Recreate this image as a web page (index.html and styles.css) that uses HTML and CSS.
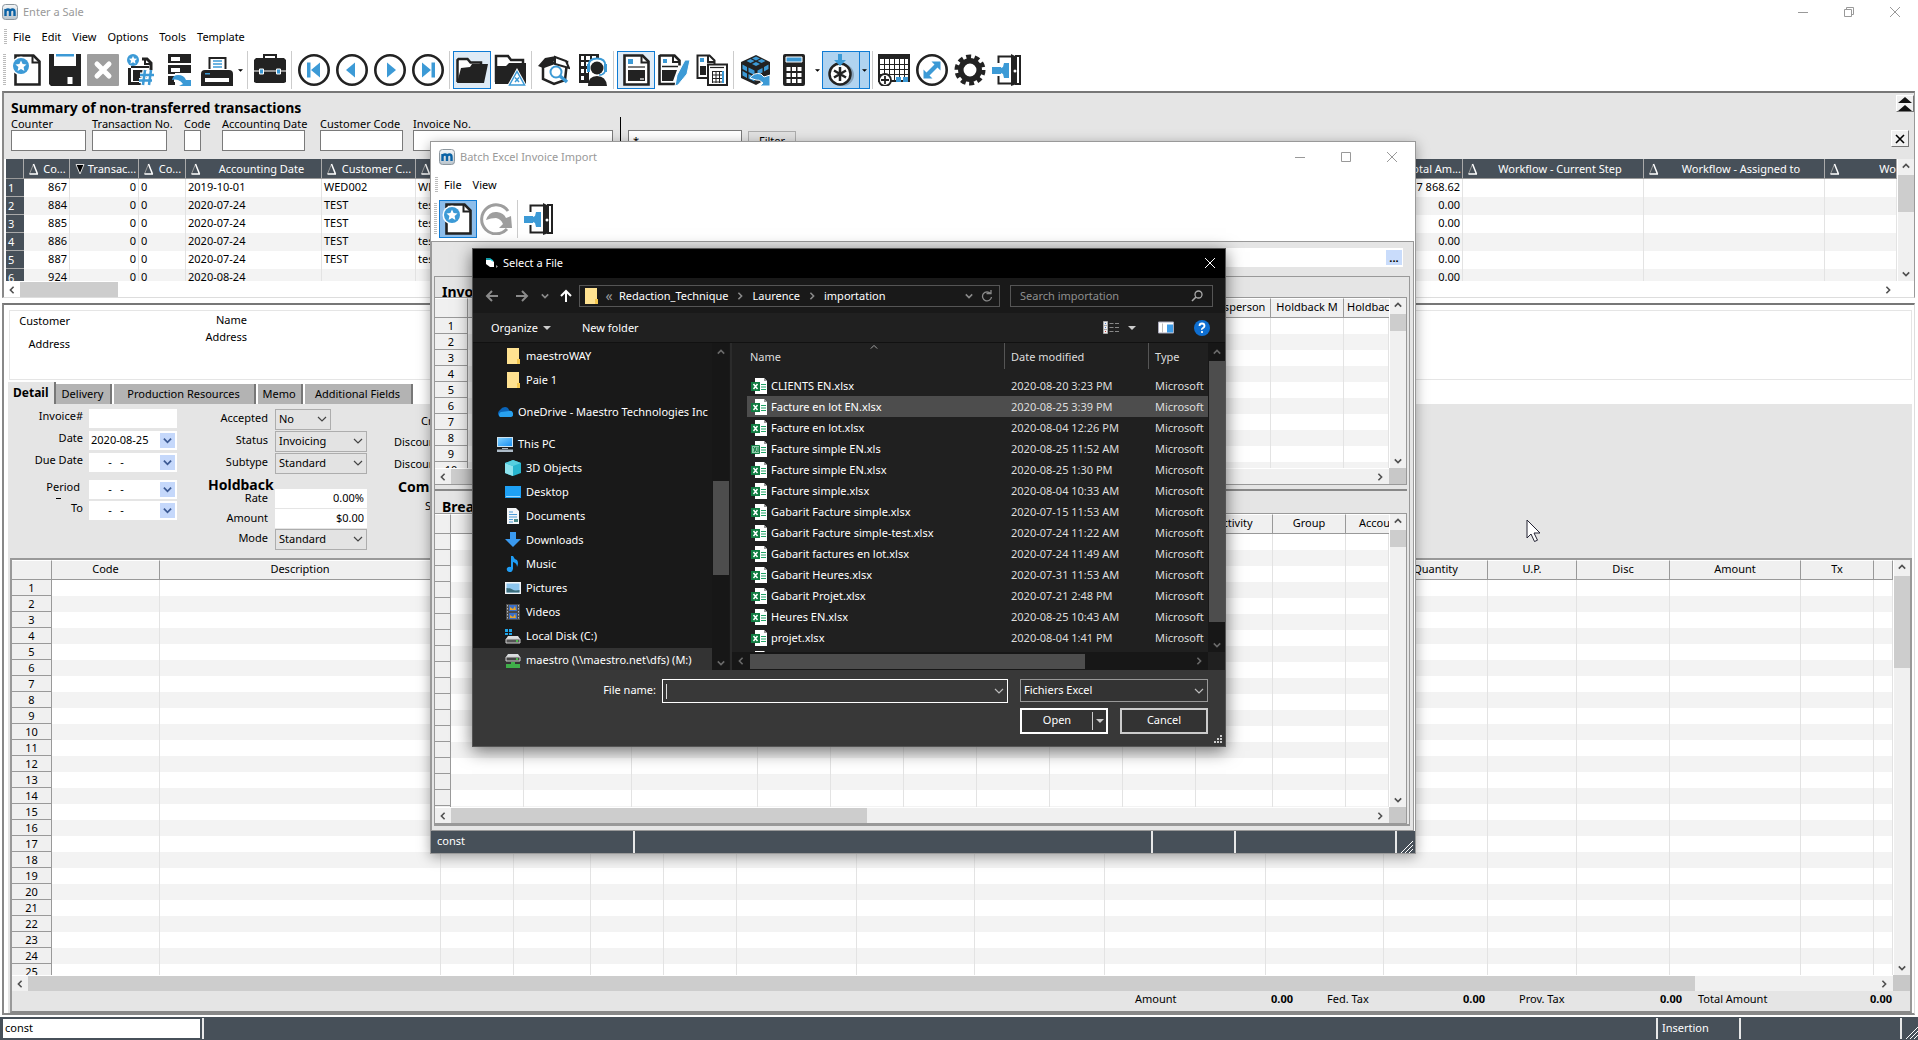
FILE: index.html
```html
<!DOCTYPE html>
<html lang="en">
<head>
<meta charset="utf-8">
<title>Enter a Sale</title>
<link rel="stylesheet" href="styles.css">
<script src="grid.js" defer></script>
</head>
<body>
<svg class="sprite" aria-hidden="true">
  <defs>
    <linearGradient id="logoBg" x1="0" y1="0" x2="0" y2="1"><stop offset="0" stop-color="#f4f6f8"/><stop offset="1" stop-color="#b9c4cc"/></linearGradient>
    <linearGradient id="screen" x1="0" y1="0" x2="1" y2="1"><stop offset="0" stop-color="#7fd0ff"/><stop offset="1" stop-color="#1a8ff0"/></linearGradient>
  </defs>
  <symbol id="logo" viewBox="0 0 16 16"><rect x=".5" y=".5" width="15" height="15" rx="3" fill="url(#logoBg)" stroke="#8d979e"/><path d="M3.500 12V5M3.500 7.500Q4 5.500 6 5.500t2 2.500V12M8 7.500Q8.500 5.500 10.500 5.500t2 2.500V12" fill="none" stroke="#0a62a5" stroke-width="2.400"/></symbol>
  <symbol id="star-badge" viewBox="0 0 16 16"><circle cx="8" cy="8" r="8" fill="#3c9ad6"/><path d="M8 2.500l1.600 3.500 3.900.4-2.900 2.600.8 3.900L8 11l-3.400 1.900.8-3.900L2.500 6.400 6.400 6z" fill="#fff"/></symbol>
  <symbol id="new" viewBox="0 0 32 32"><path d="M4.500 1.500h18l6 6v23h-24z" fill="#fff" stroke="#222" stroke-width="2.600"/><path d="M21.500 1v7.500H29" fill="none" stroke="#222" stroke-width="2"/><circle cx="10" cy="12" r="9.500" fill="#fff"/><use href="#star-badge" x="2" y="4" width="16" height="16"/></symbol>
  <symbol id="save" viewBox="0 0 32 32"><path d="M0 0h5v12h22V0h5v32H2l-2-2z" fill="#222"/><path d="M7 0h18v2.500H7z" fill="#3c9ad6"/><path d="M5 21h22v11H5z" fill="#222"/><path d="M18.500 23h5v7h-5z" fill="#fff"/></symbol>
  <symbol id="delete" viewBox="0 0 32 32"><rect width="32" height="32" rx="1" fill="#9e9e9e"/><path d="M10 10l12 12M22 10L10 22" stroke="#fff" stroke-width="5" stroke-linecap="round"/></symbol>
  <symbol id="number" viewBox="0 0 32 32"><path d="M17 5h5l4 4v8M4.500 14v15.500H18" fill="none" stroke="#222" stroke-width="3"/><path d="M20 4v6h6" fill="none" stroke="#222" stroke-width="2"/><path d="M8 16h14v11H8z" fill="#222"/><path d="M6 13h18" stroke="#222" stroke-width="2"/><use href="#star-badge" x="2" y="0" width="12" height="12"/><path d="M20 16l-2 15M26 16l-2 15M15 21h14M14 26.500h13" stroke="#fff" stroke-width="5"/><path d="M20 16l-2 15M26 16l-2 15M15 21h14M14 26.500h13" stroke="#3c9ad6" stroke-width="2.500"/></symbol>
  <symbol id="server" viewBox="0 0 32 32"><path d="M5 0h23v9H5zM5 11h23v9H5zM5 22h12v9H5z" fill="#222"/><path d="M8 3h9v4H8zM8 14h9v4H8zM8 25h6v3H8z" fill="#fff"/><path d="M12 19h17v13H12z" fill="#fff"/><path d="M5 22h6v9H5z" fill="#222"/><path d="M9 26q1-5 6-5 6 0 8 5h5v6H16l4-2q-2-3-5-4-3-1-6 0z" fill="#3c9ad6"/></symbol>
  <symbol id="print" viewBox="0 0 32 32"><path d="M8.500 15V4h16v11" fill="#fff" stroke="#222" stroke-width="2"/><path d="M12 7h9M12 10h9M12 13h9" stroke="#3c9ad6" stroke-width="1.500"/><path d="M4 16h24q4 0 4 4v12H0V20q0-4 4-4z" fill="#222"/><path d="M4 24h24v4H4z" fill="#fff"/><path d="M4 19h5v1.500H4z" fill="#3c9ad6"/></symbol>
  <symbol id="briefcase" viewBox="0 0 32 32"><path d="M10 4V1h12v3" fill="none" stroke="#222" stroke-width="2"/><path d="M2 4h28l2 2v22l-2 1H2l-2-1V6z" fill="#222"/><path d="M0 17h32" stroke="#fff" stroke-width="1"/><path d="M5.500 15h4v5h-4zM22.500 15h4v5h-4z" fill="#3c9ad6" stroke="#fff"/></symbol>
  <symbol id="ring" viewBox="0 0 32 32"><circle cx="16" cy="16" r="14.700" fill="#fff" stroke="#222" stroke-width="2.600"/></symbol>
  <symbol id="first" viewBox="0 0 32 32"><use href="#ring" width="32" height="32"/><path d="M9 8.500h3.500v15H9zM22 8.500v15L13 16z" fill="#3c9ad6"/></symbol>
  <symbol id="prev" viewBox="0 0 32 32"><use href="#ring" width="32" height="32"/><path d="M19 8.500v15L10 16z" fill="#3c9ad6"/></symbol>
  <symbol id="next" viewBox="0 0 32 32"><use href="#ring" width="32" height="32"/><path d="M13 8.500v15L22 16z" fill="#3c9ad6"/></symbol>
  <symbol id="last" viewBox="0 0 32 32"><use href="#ring" width="32" height="32"/><path d="M19.500 8.500H23v15h-3.500zM10 8.500v15L19 16z" fill="#3c9ad6"/></symbol>
  <symbol id="folder" viewBox="0 0 32 32"><path d="M1.500 28V6l1-1h9l3 3.500h10.500V12" fill="#fff" stroke="#222" stroke-width="2.500"/><path d="M1 29l4-15 9-1 2-3h16l-4 19z" fill="#222"/></symbol>
  <symbol id="folder-alert" viewBox="0 0 32 32"><path d="M2 28V2h12l3 4h12v6" fill="none" stroke="#222" stroke-width="2.500"/><path d="M1 30V12h11l3-3h17v21z" fill="#222"/><path d="M13 32L23 14l10 18z" fill="#fff"/><path d="M15.500 31l7.500-13.500L30.500 31z" fill="#fff" stroke="#3c9ad6" stroke-width="1.500"/><path d="M21 23.500l4 4.500M25 23.500L21 28" stroke="#3c9ad6" stroke-width="1.500"/></symbol>
  <symbol id="house" viewBox="0 0 32 32"><path d="M5 13l11-4 13-1-2 18-11 4-11-5z" fill="#fff" stroke="#222" stroke-width="2.500"/><path d="M0 12l7-8 11-2-3 7-10 5z" fill="#222"/><path d="M17 3l11 4 3 7-14-4z" fill="#fff" stroke="#222" stroke-width="2"/><circle cx="18" cy="18" r="5.500" fill="#fff" stroke="#3c9ad6" stroke-width="2"/><path d="M22 22l7 6" stroke="#3c9ad6" stroke-width="3.500"/></symbol>
  <symbol id="agent" viewBox="0 0 32 32"><path d="M3 0h20v10H13v19H3z" fill="#222"/><path d="M5 2h3v4H5zM10 2h4v4h-4zM16 2h4v4h-4zM5 8h3v4H5zM10 8h3v4h-3zM5 15h3v4H5zM10 15h2v4h-2zM5 22h3v4H5z" fill="#fff"/><circle cx="21" cy="13" r="9" fill="#fff"/><circle cx="21" cy="14" r="6.500" fill="#222"/><path d="M12 32q0-10 9-10t10 10z" fill="#222"/><path d="M12.500 12q0-7.500 8.500-7.500t8.500 7.500" fill="none" stroke="#3c9ad6" stroke-width="1.800"/><path d="M11 10h3v8h-3zM28 10h3v8h-3z" fill="#3c9ad6"/><path d="M29 18q-2 3-6 3" fill="none" stroke="#3c9ad6" stroke-width="1.500"/></symbol>
  <symbol id="page" viewBox="0 0 32 32"><path d="M4.500 1.500h18l6 6v23h-24z" fill="#fff" stroke="#222" stroke-width="2.600"/><path d="M21.500 1v7.500H29" fill="none" stroke="#222" stroke-width="2"/><path d="M8 5h5v5H8z" fill="#3c9ad6"/><path d="M8 13h17" stroke="#222" stroke-width="1.200"/><path d="M8 16h17v11H8z" fill="#222"/><path d="M20 25h4" stroke="#fff" stroke-width="1.200"/></symbol>
  <symbol id="page-pen" viewBox="0 0 32 32"><path d="M1.500 1.500h15l5 5v5M1.500 1v29H18" fill="none" stroke="#222" stroke-width="2.600"/><path d="M15 1v7h7" fill="none" stroke="#222" stroke-width="2"/><path d="M5 5h4v4H5z" fill="#3c9ad6"/><path d="M4 12.500h16" stroke="#222" stroke-width="1.500"/><path d="M4 16h15l-4 11H4z" fill="#222"/><path d="M17 32l2-11 8-15h5l-3 14-9 11z" fill="#3c9ad6" stroke="#fff"/></symbol>
  <symbol id="page-calc" viewBox="0 0 32 32"><path d="M1.500 25V1.500h12l5 5v4M1 24h10" fill="none" stroke="#222" stroke-width="2"/><path d="M12 1v7h7" fill="none" stroke="#222" stroke-width="2"/><path d="M4 4h4v4H4z" fill="#3c9ad6"/><path d="M4 12h6v9H4z" fill="#222"/><path d="M12 10.500h19v20.500H12z" fill="#fff" stroke="#222" stroke-width="2"/><path d="M14 13.500h14" stroke="#222" stroke-width="1.200"/><path d="M16 17.500h12M16 21h12M16 24.500h12M16 28h12M16.500 17v12M20 17v12M23.500 17v12" stroke="#222"/><path d="M26 17h2v12h-2z" fill="#3c9ad6"/></symbol>
  <symbol id="cube" viewBox="0 0 32 32"><path d="M1 8l15-7 14 7v15l-14 8L1 24z" fill="#222"/><path d="M16 2.500l4 2-4 2-4-2zM10.500 5l4 2-4 2-4-2zM21.500 5l4 2-4 2-4-2zM16 8l4 2-4 2-4-2zM2.500 10.500L7 13v4.500l-4.500-2.500zM8.500 13.500l6 3v4.500l-6-3zM2.500 17L7 19.500V24l-4.500-2.500zM8.500 20l6 3v4.500l-6-3zM17.500 16.500l5-2.500v4.500l-5 2zM24 13l4.500-2.500V15L24 17.500z" fill="#3c9ad6"/><path d="M10 24q4-6 11-4l3 3 6-2v11H20l3-3q-4-4-7-3z" fill="#3c9ad6" stroke="#fff"/></symbol>
  <symbol id="calculator" viewBox="0 0 32 32"><rect x="5" width="22" height="32" rx="2" fill="#222"/><path d="M8 3h16v5H8z" fill="#3c9ad6" stroke="#fff"/><path d="M10.500 13v16M16 13v16M21.500 13v16" stroke="#fff" stroke-width="4" stroke-dasharray="4 2"/></symbol>
  <symbol id="asterisk" viewBox="0 0 32 32"><circle cx="18" cy="21" r="11" fill="#87a3bb"/><circle cx="15" cy="20" r="10.500" fill="#fff" stroke="#222" stroke-width="2.500"/><path d="M15 13v14M9 16.500l12 7M21 16.500l-12 7" stroke="#222" stroke-width="2.500"/><path d="M13 0h4v6h4l-6 6-6-6h4z" fill="#3c9ad6"/></symbol>
  <symbol id="grid-add" viewBox="0 0 32 32"><path d="M1 1h30v26H1z" fill="#fff" stroke="#222" stroke-width="2"/><path d="M1 1h30v4H1z" fill="#222"/><path d="M6.500 4v22M11.500 4v22M16.500 4v22M21.500 4v22M26.500 4v22M1 10.500h30M1 15.500h30M1 20.500h30" stroke="#222"/><path d="M18 23h5v5h-5zM25 23h5v5h-5z" fill="#3c9ad6"/><circle cx="7" cy="26" r="6" fill="#fff" stroke="#222" stroke-width="1.800"/><path d="M7 22v8M3 26h8" stroke="#222" stroke-width="1.800"/></symbol>
  <symbol id="expand" viewBox="0 0 32 32"><use href="#ring" width="32" height="32"/><path d="M24.500 7.500v9l-3-3-8 8 3 3h-9v-9l3 3 8-8-3-3z" fill="#3c9ad6"/></symbol>
  <symbol id="gear" viewBox="0 0 32 32"><circle cx="16" cy="16" r="13" fill="none" stroke="#222" stroke-width="5" stroke-dasharray="4.800 3.370"/><circle cx="16" cy="16" r="9.200" fill="none" stroke="#222" stroke-width="5.500"/></symbol>
  <symbol id="door" viewBox="0 0 32 32"><path d="M19 2.500H6.500V9M6.500 22v7.500H19M23 2h5v28h-5" fill="none" stroke="#222" stroke-width="2"/><path d="M19 0l6 3v27l-6 2z" fill="#222"/><circle cx="23" cy="17" r="1.500" fill="#fff"/><path d="M0 13h9V9h8v15H9v-4H0z" fill="#3c9ad6"/><path d="M9 8l3 1-1 4-2 1zM9 25l3-1-1-4-2-1z" fill="#fff"/></symbol>
  <symbol id="redo" viewBox="0 0 32 32"><path d="M28 8A14.500 14.500 0 1 0 27 26" fill="none" stroke="#9e9e9e" stroke-width="3"/><path d="M6 17q3-9 11-8 7 1 9 6l5-2 1 12H19l4-4q-2-5-7-6-5 0-10 2z" fill="#9e9e9e"/></symbol>
  <symbol id="chev-l" viewBox="0 0 10 10"><path d="M7 1L3 5l4 4" fill="none" stroke="currentColor" stroke-width="2"/></symbol>
  <symbol id="chev-r" viewBox="0 0 10 10"><path d="M3 1l4 4-4 4" fill="none" stroke="currentColor" stroke-width="2"/></symbol>
  <symbol id="chev-u" viewBox="0 0 10 10"><path d="M1 7l4-4 4 4" fill="none" stroke="currentColor" stroke-width="2"/></symbol>
  <symbol id="chev-d" viewBox="0 0 10 10"><path d="M1 3l4 4 4-4" fill="none" stroke="currentColor" stroke-width="2"/></symbol>
  <symbol id="thin-d" viewBox="0 0 10 10"><path d="M1 3l4 4 4-4" fill="none" stroke="currentColor" stroke-width="1.200"/></symbol>
  <symbol id="thin-u" viewBox="0 0 10 10"><path d="M1 7l4-4 4 4" fill="none" stroke="currentColor" stroke-width="1.200"/></symbol>
  <symbol id="caret" viewBox="0 0 8 4"><path d="M0 0h8L4 4z" fill="currentColor"/></symbol>
  <symbol id="sort" viewBox="0 0 10 12"><path d="M.5 11L4.500 1" stroke="#999"/><path d="M4.500 1L8.500 11M.5 11h8.500" fill="none" stroke="#fff" stroke-width="1.500"/></symbol>
  <symbol id="sorted" viewBox="0 0 10 12"><path d="M1 1.500h8L5 11z" fill="#000" stroke="#ddd"/></symbol>
  <symbol id="win-min" viewBox="0 0 12 12"><path d="M1 6.500h10" stroke="currentColor"/></symbol>
  <symbol id="win-max" viewBox="0 0 12 12"><path d="M1.500 1.500h9v9h-9z" fill="none" stroke="currentColor"/></symbol>
  <symbol id="win-restore" viewBox="0 0 12 12"><path d="M1.500 3.500h7v7h-7zM3.500 3.500v-2h7v7h-2" fill="none" stroke="currentColor"/></symbol>
  <symbol id="win-close" viewBox="0 0 12 12"><path d="M1 1l10 10M11 1L1 11" stroke="currentColor"/></symbol>
  <symbol id="clear-x" viewBox="0 0 12 12"><path d="M2 2l8 8M10 2L2 10" stroke="currentColor" stroke-width="1.600"/></symbol>
  <symbol id="collapse" viewBox="0 0 16 16"><path d="M1 7l7-6 7 6zM1 15l7-6 7 6z" fill="#111"/></symbol>
  <symbol id="grip" viewBox="0 0 12 12"><path d="M0 12L12 0M4 12l8-8M8 12l4-4" stroke="#fff"/></symbol>
  <symbol id="yfolder" viewBox="0 0 16 16"><path d="M2 0h12v11l1 1v4H2z" fill="#ffe291"/><path d="M12 11h3v5h-3z" fill="#f5c850"/></symbol>
  <symbol id="cloud" viewBox="0 0 16 16"><path d="M2 12a4 4 0 0 1 1-6q2-3 5-3 3 0 4 3l2 2-8 5z" fill="#0a64b8"/><path d="M3 13a3 3 0 0 1 1-5l8-1a3 3 0 0 1 2 6z" fill="#28a0ee"/></symbol>
  <symbol id="pc" viewBox="0 0 16 16"><path d="M0 1h16v10H0z" fill="#d0e4f0"/><path d="M1 2h14v8H1z" fill="url(#screen)"/><path d="M5 12h6v1H5zM0 13.500h16V16H0z" fill="#aebcc8"/></symbol>
  <symbol id="cube3d" viewBox="0 0 16 16"><path d="M0 3l8-3 8 3v10l-8 3-8-3z" fill="#27b5cf"/><path d="M0 3l8 3v10l-8-3z" fill="#8de3ee"/><path d="M0 3l8-3 8 3-8 3z" fill="#56cfe0"/></symbol>
  <symbol id="desktop" viewBox="0 0 16 16"><path d="M0 2h16v12H0z" fill="#1ea0f5"/><path d="M1 12h14v1H1z" fill="#9ad6ff"/></symbol>
  <symbol id="document" viewBox="0 0 16 16"><path d="M2 0h9l3 3v13H2z" fill="#f4f6f8"/><path d="M4 4h4M4 6.500h8M4 9h8M4 11.500h4M4 14h4" stroke="#4d9bd6"/><path d="M9 11h4v3H9z" fill="#4b8b8b"/></symbol>
  <symbol id="download" viewBox="0 0 16 16"><path d="M5 0h6v7h5l-8 8-8-8h5z" fill="#3a9af0"/></symbol>
  <symbol id="music" viewBox="0 0 16 16"><path d="M6 0h2q1 3 4 4 2 3 0 7 0-4-4-5v7q-1 4-4 3-3-1-2-4 2-2 4-1z" fill="#1f9df5"/></symbol>
  <symbol id="picture" viewBox="0 0 16 16"><path d="M0 2h16v12H0z" fill="#f3f6f8"/><path d="M1.500 3.500h13v9h-13z" fill="#8cc5ee"/><path d="M1.500 8q4 0 6 1.500t7 .5v2.500h-13z" fill="#3c6e7c"/></symbol>
  <symbol id="video" viewBox="0 0 16 16"><path d="M1 0h14v16H1z" fill="#4a4a4a"/><path d="M4 1h8v6H4z" fill="#3b6fc9"/><path d="M4 9h8v6H4z" fill="#3b6fc9"/><path d="M5 3l3 2 2-3 1 4H5zM5 11l3 2 2-3 1 4H5z" fill="#e8a52c"/><path d="M2.500 1v14M13.500 1v14" stroke="#bbb" stroke-dasharray="1.500 1.500"/></symbol>
  <symbol id="disk" viewBox="0 0 16 16"><path d="M0 1h3v3H0zM4 1h3v3H4zM0 5h3v2H0zM4 5h3v2H4z" fill="#1fa5e8"/><path d="M3 8h10l2 3H1z" fill="#d9dcde"/><path d="M1 11h14v4H1z" fill="#555" stroke="#ccc"/><path d="M11 13h2" stroke="#4be04b" stroke-width="1.500"/></symbol>
  <symbol id="netdisk" viewBox="0 0 16 16"><path d="M3 2h10l2 3H1z" fill="#d9dcde"/><path d="M1 5h14v4H1z" fill="#444" stroke="#ccc"/><path d="M11 7h2" stroke="#4be04b" stroke-width="1.500"/><path d="M6 10h4v2h5v4H1v-4h5z" fill="#3fae49"/></symbol>
  <symbol id="xlsx" viewBox="0 0 16 16"><path d="M4 0h9l3 3v13H4z" fill="#fff"/><path d="M13 0l3 3h-3z" fill="#999"/><path d="M10 6.500h5M10 9h5M10 11.500h5" stroke="#21a366"/><path d="M0 4h9v9H0z" fill="#107c41"/><path d="M2.500 6l4 5M6.500 6l-4 5" stroke="#fff" stroke-width="1.500"/></symbol>
  <symbol id="xls" viewBox="0 0 16 16"><path d="M4 0h9l3 3v13H4z" fill="#fff"/><path d="M13 0l3 3h-3z" fill="#999"/><path d="M10 6.500h5M10 9h5M10 11.500h5" stroke="#21a366"/><path d="M.5 4.500h8v8h-8z" fill="#8fc9aa" stroke="#107c41"/><path d="M2 6l4 5M5 6l-2 5M7 6v5" stroke="#107c41"/></symbol>
  <symbol id="appicon" viewBox="0 0 16 16"><path d="M3 5h6l2 2v5H7L3 9z" fill="#fff"/><path d="M3 4h4l3 2" fill="none" stroke="#1fd0e0" stroke-width="1.500"/><path d="M13 10l2 1.500-2 1.500z" fill="#999"/></symbol>
  <symbol id="arrow-l" viewBox="0 0 14 12"><path d="M13 6H2M7 1L2 6l5 5" fill="none" stroke="currentColor" stroke-width="2"/></symbol>
  <symbol id="arrow-r" viewBox="0 0 14 12"><path d="M1 6h11M7 1l5 5-5 5" fill="none" stroke="currentColor" stroke-width="2"/></symbol>
  <symbol id="arrow-u" viewBox="0 0 12 14"><path d="M6 13V2M1 7l5-5 5 5" fill="none" stroke="currentColor" stroke-width="2"/></symbol>
  <symbol id="refresh" viewBox="0 0 12 12"><path d="M9.500 3.500A4.500 4.500 0 1 0 10.500 7M5.500 3.500h4.500V0" fill="none" stroke="currentColor" stroke-width="1.300"/></symbol>
  <symbol id="search" viewBox="0 0 12 12"><circle cx="7.500" cy="4.500" r="3.500" fill="none" stroke="currentColor" stroke-width="1.300"/><path d="M5 7L1 11" stroke="currentColor" stroke-width="1.600"/></symbol>
  <symbol id="views" viewBox="0 0 16 13"><path d="M.5.500h4v12h-4zM0 4.500h5M0 8.500h5" fill="#eee" stroke="#aaa"/><path d="M2 2.500h1M2 6.500h1" stroke="#47c"/><path d="M2 10.500h1" stroke="#c33"/><path d="M6.500 2.500h4M12 2.500h4M6.500 6.500h4M12 6.500h4M6.500 10.500h4M12 10.500h4" stroke="#888"/></symbol>
  <symbol id="pane" viewBox="0 0 16 12"><path d="M.5.500h15v11H.5z" fill="#fff" stroke="#aab"/><path d="M4.500 2v9" stroke="#bbb"/><path d="M9 3h6v8H9z" fill="#3d9be6"/></symbol>
  <symbol id="help" viewBox="0 0 16 16"><circle cx="8" cy="8" r="8" fill="#0f6fd1"/><path d="M5.500 6q0-2.500 2.500-2.500T10.500 6Q10.500 7 9 8T8 9.800M8 11v2" fill="none" stroke="#fff" stroke-width="1.800"/></symbol>
  <symbol id="dots" viewBox="0 0 9 9"><path d="M1 8h2M4 8h2M7 8h2M4 5h2M7 5h2M7 2h2" stroke="#ccc" stroke-width="2"/></symbol>
</svg>

<div class="app">
  <header class="titlebar">
    <svg class="i16"><use href="#logo"/></svg><span>Enter a Sale</span>
    <div class="winbtns"><button aria-label="Minimize"><svg class="i12"><use href="#win-min"/></svg></button><button aria-label="Restore"><svg class="i12"><use href="#win-restore"/></svg></button><button aria-label="Close"><svg class="i12"><use href="#win-close"/></svg></button></div>
  </header>
  <nav class="menubar"><button>File</button><button>Edit</button><button>View</button><button>Options</button><button>Tools</button><button>Template</button></nav>
  <div class="toolbar">
    <button aria-label="New"><svg><use href="#new"/></svg></button><button aria-label="Save"><svg><use href="#save"/></svg></button><button aria-label="Delete"><svg><use href="#delete"/></svg></button><button aria-label="New number"><svg><use href="#number"/></svg></button><button aria-label="Transfer"><svg><use href="#server"/></svg></button><button aria-label="Print"><svg><use href="#print"/></svg></button><button class="drop" aria-label="Print options"><svg><use href="#caret"/></svg></button><i class="sep"></i>
    <button aria-label="Briefcase"><svg><use href="#briefcase"/></svg></button><i class="sep"></i>
    <button aria-label="First"><svg><use href="#first"/></svg></button><button aria-label="Previous"><svg><use href="#prev"/></svg></button><button aria-label="Next"><svg><use href="#next"/></svg></button><button aria-label="Last"><svg><use href="#last"/></svg></button><i class="sep"></i>
    <button class="on" aria-label="Open folder"><svg><use href="#folder"/></svg></button><button aria-label="Folder alerts"><svg><use href="#folder-alert"/></svg></button><i class="sep"></i>
    <button aria-label="Find product"><svg><use href="#house"/></svg></button><button aria-label="Support"><svg><use href="#agent"/></svg></button><i class="sep"></i>
    <button class="on" aria-label="Page"><svg><use href="#page"/></svg></button><button aria-label="Edit page"><svg><use href="#page-pen"/></svg></button><button aria-label="Page totals"><svg><use href="#page-calc"/></svg></button><i class="sep"></i>
    <button aria-label="Cube"><svg><use href="#cube"/></svg></button><button aria-label="Calculator"><svg><use href="#calculator"/></svg></button><button class="drop" aria-label="Calculator options"><svg><use href="#caret"/></svg></button><button class="hot" aria-label="Add"><svg><use href="#asterisk"/></svg></button><button class="hot drop" aria-label="Add options"><svg><use href="#caret"/></svg></button><i class="sep tight"></i>
    <button aria-label="Add grid"><svg><use href="#grid-add"/></svg></button><button aria-label="Expand"><svg><use href="#expand"/></svg></button><button aria-label="Settings"><svg><use href="#gear"/></svg></button><button aria-label="Exit"><svg><use href="#door"/></svg></button>
  </div>

  <section class="summary">
    <div class="summary-head">
      <div class="summary-left">
        <h2>Summary of non-transferred transactions</h2>
        <div class="filters">
          <label>Counter<input class="w75"></label><label>Transaction No.<input class="w75"></label><label>Code<input class="w17"></label><label>Accounting Date<input class="w83"></label><label>Customer Code<input class="w83"></label><label>Invoice No.<input class="w200"></label>
          <div class="any"><input aria-label="Value" value="*"><button>Filter</button></div>
        </div>
      </div>
      <div class="summary-btns"><button class="collapse" aria-label="Collapse"><svg class="i16"><use href="#collapse"/></svg></button><button class="clear" aria-label="Clear"><svg class="i12"><use href="#clear-x"/></svg></button></div>
    </div>
    <div class="gridbox">
      <div class="clip sumclip">
        <table class="sumgrid">
          <colgroup><col class="c18"><col class="c46"><col class="c69"><col class="c47"><col class="c136"><col class="c94"><col><col class="c100"><col class="c181"><col class="c181"><col class="c72"></colgroup>
          <thead><tr><th></th><th><span><svg><use href="#sort"/></svg><b>Co...</b></span></th><th><span><svg><use href="#sorted"/></svg><b>Transac...</b></span></th><th><span><svg><use href="#sort"/></svg><b>Co...</b></span></th><th><span><svg><use href="#sort"/></svg><b>Accounting Date</b></span></th><th><span><svg><use href="#sort"/></svg><b>Customer C...</b></span></th><th><span><svg><use href="#sort"/></svg><b>Customer Name</b></span></th><th><span><svg><use href="#sort"/></svg><b class="right">Total Am...</b></span></th><th><span><svg><use href="#sort"/></svg><b>Workflow - Current Step</b></span></th><th><span><svg><use href="#sort"/></svg><b>Workflow - Assigned to</b></span></th><th><span><svg><use href="#sort"/></svg><b class="cut">Workflow</b></span></th></tr></thead>
          <tbody>
            <tr><th>1</th><td>867</td><td>0</td><td>0</td><td>2019-10-01</td><td>WED002</td><td>WEDNESDAY</td><td>7 868.62</td><td></td><td></td><td></td></tr>
            <tr><th>2</th><td>884</td><td>0</td><td>0</td><td>2020-07-24</td><td>TEST</td><td>test</td><td>0.00</td><td></td><td></td><td></td></tr>
            <tr><th>3</th><td>885</td><td>0</td><td>0</td><td>2020-07-24</td><td>TEST</td><td>test</td><td>0.00</td><td></td><td></td><td></td></tr>
            <tr><th>4</th><td>886</td><td>0</td><td>0</td><td>2020-07-24</td><td>TEST</td><td>test</td><td>0.00</td><td></td><td></td><td></td></tr>
            <tr><th>5</th><td>887</td><td>0</td><td>0</td><td>2020-07-24</td><td>TEST</td><td>test</td><td>0.00</td><td></td><td></td><td></td></tr>
            <tr><th>6</th><td>924</td><td>0</td><td>0</td><td>2020-08-24</td><td></td><td></td><td>0.00</td><td></td><td></td><td></td></tr>
          </tbody>
        </table>
      </div>
      <div class="vscroll"><svg><use href="#chev-u"/></svg><i class="th37"></i><svg><use href="#chev-d"/></svg></div>
      <div class="hscroll plain"><svg><use href="#chev-l"/></svg><i class="tw98"></i><svg><use href="#chev-r"/></svg></div>
    </div>
  </section>

  <main class="sale">
    <div class="customer"><div class="cust-a"><p>Customer</p><p>Address</p></div><div class="cust-b"><p>Name</p><p>Address</p></div></div>
    <div class="tabs" role="tablist"><button class="active" role="tab">Detail</button><button class="tab-s" role="tab">Delivery</button><button class="tab-l" role="tab">Production Resources</button><button class="tab-xs" role="tab">Memo</button><button class="tab-m" role="tab">Additional Fields</button></div>
    <div class="detail">
      <form class="form">
        <div class="col-a">
          <label for="inv">Invoice#</label><span class="field"><input id="inv"></span>
          <label for="dt">Date</label><span class="field"><input id="dt" value="2020-08-25"><button type="button" aria-label="Pick date"><svg><use href="#chev-d"/></svg></button></span>
          <label for="due">Due Date</label><span class="field"><input id="due" value="      -   -"><button type="button" aria-label="Pick due date"><svg><use href="#chev-d"/></svg></button></span>
          <label for="per" class="period">Period</label><span class="field gap"><input id="per" value="      -   -"><button type="button" aria-label="Pick start"><svg><use href="#chev-d"/></svg></button></span>
          <label for="to" class="to">To</label><span class="field last"><input id="to" value="      -   -"><button type="button" aria-label="Pick end"><svg><use href="#chev-d"/></svg></button></span>
        </div>
        <div class="col-b">
          <label for="acc">Accepted</label><span class="sel short"><select id="acc"><option>No</option></select><svg><use href="#thin-d"/></svg></span>
          <label for="st">Status</label><span class="sel"><select id="st"><option>Invoicing</option></select><svg><use href="#thin-d"/></svg></span>
          <label for="sub">Subtype</label><span class="sel"><select id="sub"><option>Standard</option></select><svg><use href="#thin-d"/></svg></span>
          <h3>Holdback</h3>
          <label for="rate">Rate</label><span class="num"><input id="rate" value="0.00%"></span>
          <label for="amt">Amount</label><span class="num"><input id="amt" value="$0.00"></span>
          <label for="mode">Mode</label><span class="sel"><select id="mode"><option>Standard</option></select><svg><use href="#thin-d"/></svg></span>
        </div>
        <div class="col-c"><p>Credit</p><p>Discount</p><p>Discount</p><h3>Commission</h3><p>Sales</p></div>
      </form>
      <div class="lines">
        <div class="gridbox grow">
          <div class="clip">
            <table class="datagrid" data-rows="25" data-numbered>
              <colgroup><col class="c40"><col class="c108"><col><col class="c73"><col class="c77"><col class="c73"><col class="c73"><col class="c120"><col class="c118"><col class="c130"><col class="c161"><col class="c118"><col class="c104"><col class="c89"><col class="c93"><col class="c131"><col class="c73"><col class="c19"></colgroup>
              <thead><tr><th></th><th>Code</th><th>Description</th><th></th><th></th><th></th><th></th><th></th><th></th><th></th><th></th><th></th><th>Quantity</th><th>U.P.</th><th>Disc</th><th>Amount</th><th>Tx</th><th></th></tr></thead>
              <tbody></tbody>
            </table>
          </div>
          <div class="vscroll"><svg><use href="#chev-u"/></svg><i class="th92"></i><svg><use href="#chev-d"/></svg></div>
          <div class="hscroll"><svg><use href="#chev-l"/></svg><i class="tgrow"></i><svg><use href="#chev-r"/></svg></div>
          <i class="corner"></i>
        </div>
        <dl class="totals"><div class="t158"><dt>Amount</dt><dd>0.00</dd></div><div class="t158"><dt>Fed. Tax</dt><dd>0.00</dd></div><div class="t163"><dt>Prov. Tax</dt><dd>0.00</dd></div><div class="t194"><dt>Total Amount</dt><dd>0.00</dd></div></dl>
      </div>
    </div>
  </main>
  <footer class="status main-status"><input aria-label="Status" value="const"><span class="st-grow"></span><span class="st82">Insertion</span><span class="st160"></span><span class="st18"><svg class="i12"><use href="#grip"/></svg></span></footer>
</div>

<section class="window" aria-label="Batch Excel Invoice Import">
  <header class="titlebar"><svg class="i16"><use href="#logo"/></svg><span>Batch Excel Invoice Import</span>
    <div class="winbtns"><button aria-label="Minimize"><svg class="i12"><use href="#win-min"/></svg></button><button aria-label="Maximize"><svg class="i12"><use href="#win-max"/></svg></button><button aria-label="Close"><svg class="i12"><use href="#win-close"/></svg></button></div></header>
  <nav class="menubar"><button>File</button><button>View</button></nav>
  <div class="toolbar"><button class="press" aria-label="New"><svg><use href="#new"/></svg></button><button aria-label="Redo"><svg><use href="#redo"/></svg></button><i class="sep"></i><button aria-label="Exit"><svg><use href="#door"/></svg></button></div>
  <div class="import">
    <div class="path"><input aria-label="File path"><button>...</button></div>
    <div class="panels">
      <section class="panel p1">
        <h3>Invoices</h3>
        <div class="gridbox">
          <div class="clip">
            <table class="datagrid" data-rows="10" data-numbered>
              <colgroup><col class="c33"><col class="c73"><col class="c73"><col class="c73"><col class="c73"><col class="c73"><col class="c73"><col class="c73"><col class="c73"><col><col class="c73"><col class="c73"><col class="c45"></colgroup>
              <thead><tr><th></th><th></th><th></th><th></th><th></th><th></th><th></th><th></th><th></th><th></th><th>Salesperson</th><th>Holdback M</th><th class="cutcell">Holdback</th></tr></thead>
              <tbody></tbody>
            </table>
          </div>
          <div class="vscroll"><svg><use href="#chev-u"/></svg><i class="th17"></i><svg><use href="#chev-d"/></svg></div>
          <div class="hscroll"><svg><use href="#chev-l"/></svg><i class="tw416"></i><svg><use href="#chev-r"/></svg></div>
          <i class="corner"></i>
        </div>
      </section>
      <section class="panel p2">
        <h3>Breakdown</h3>
        <div class="gridbox grow">
          <div class="clip">
            <table class="datagrid" data-rows="18">
              <colgroup><col class="c16"><col class="c73"><col class="c108"><col><col class="c73"><col class="c73"><col class="c73"><col class="c73"><col class="c73"><col class="c73"><col class="c77"><col class="c73"><col class="c43"></colgroup>
              <thead><tr><th></th><th></th><th></th><th></th><th></th><th></th><th></th><th></th><th></th><th></th><th>Activity</th><th>Group</th><th class="cutcell acct">Account</th></tr></thead>
              <tbody></tbody>
            </table>
          </div>
          <div class="vscroll"><svg><use href="#chev-u"/></svg><i class="th17"></i><svg><use href="#chev-d"/></svg></div>
          <div class="hscroll"><svg><use href="#chev-l"/></svg><i class="tw416"></i><svg><use href="#chev-r"/></svg></div>
          <i class="corner"></i>
        </div>
      </section>
    </div>
  </div>
  <footer class="status"><span class="st202">const</span><span class="st-grow"></span><span class="st82"></span><span class="st160"></span><span class="st18"><svg class="i12"><use href="#grip"/></svg></span></footer>
</section>

<section class="picker" role="dialog" aria-label="Select a File">
  <header class="pk-title"><svg class="i16"><use href="#appicon"/></svg><span>Select a File</span><button aria-label="Close"><svg class="i12"><use href="#win-close"/></svg></button></header>
  <div class="pk-nav">
    <button class="nav dim" aria-label="Back"><svg><use href="#arrow-l"/></svg></button><button class="nav dim" aria-label="Forward"><svg><use href="#arrow-r"/></svg></button><button class="recent dim" aria-label="Recent"><svg class="i8"><use href="#chev-d"/></svg></button><button class="up" aria-label="Up"><svg><use href="#arrow-u"/></svg></button>
    <div class="crumbs"><svg class="i16"><use href="#yfolder"/></svg><i>«</i><a href="#">Redaction_Technique</a><svg class="i8 dim"><use href="#chev-r"/></svg><a href="#">Laurence</a><svg class="i8 dim"><use href="#chev-r"/></svg><a href="#">importation</a><span class="grow"></span><button aria-label="History" class="dim"><svg class="i8"><use href="#chev-d"/></svg></button><button aria-label="Refresh" class="dim"><svg class="i12"><use href="#refresh"/></svg></button></div>
    <div class="search"><input placeholder="Search importation" aria-label="Search importation"><svg class="i12"><use href="#search"/></svg></div>
  </div>
  <div class="pk-tools"><button>Organize <svg class="car"><use href="#caret"/></svg></button><button>New folder</button><span class="grow"></span><button aria-label="View"><svg class="vw"><use href="#views"/></svg></button><button aria-label="More views"><svg class="car"><use href="#caret"/></svg></button><button aria-label="Preview pane" class="pane"><svg class="vw"><use href="#pane"/></svg></button><button aria-label="Help"><svg class="i16"><use href="#help"/></svg></button></div>
  <div class="pk-body">
    <ul class="tree">
      <li class="sub"><svg class="i16"><use href="#yfolder"/></svg>maestroWAY</li>
      <li class="sub"><svg class="i16"><use href="#yfolder"/></svg>Paie 1</li>
      <li class="root"><svg class="i16"><use href="#cloud"/></svg>OneDrive - Maestro Technologies Inc</li>
      <li class="root"><svg class="i16"><use href="#pc"/></svg>This PC</li>
      <li class="sub"><svg class="i16"><use href="#cube3d"/></svg>3D Objects</li>
      <li class="sub"><svg class="i16"><use href="#desktop"/></svg>Desktop</li>
      <li class="sub"><svg class="i16"><use href="#document"/></svg>Documents</li>
      <li class="sub"><svg class="i16"><use href="#download"/></svg>Downloads</li>
      <li class="sub"><svg class="i16"><use href="#music"/></svg>Music</li>
      <li class="sub"><svg class="i16"><use href="#picture"/></svg>Pictures</li>
      <li class="sub"><svg class="i16"><use href="#video"/></svg>Videos</li>
      <li class="sub"><svg class="i16"><use href="#disk"/></svg>Local Disk (C:)</li>
      <li class="sub here"><svg class="i16"><use href="#netdisk"/></svg>maestro (\\maestro.net\dfs) (M:)</li>
    </ul>
    <div class="vscroll dark"><svg><use href="#chev-u"/></svg><b></b><i class="th94"></i><svg><use href="#chev-d"/></svg></div>
    <div class="gridbox files">
      <div class="clip">
        <table class="filelist">
          <colgroup><col><col class="c144"><col class="c60"></colgroup>
          <thead><tr><th>Name<svg class="i8 sortmark"><use href="#thin-u"/></svg></th><th>Date modified</th><th>Type</th></tr></thead>
          <tbody>
            <tr><td><svg class="i16"><use href="#xlsx"/></svg>CLIENTS EN.xlsx</td><td>2020-08-20 3:23 PM</td><td>Microsoft</td></tr>
            <tr class="hover"><td><svg class="i16"><use href="#xlsx"/></svg>Facture en lot EN.xlsx</td><td>2020-08-25 3:39 PM</td><td>Microsoft</td></tr>
            <tr><td><svg class="i16"><use href="#xlsx"/></svg>Facture en lot.xlsx</td><td>2020-08-04 12:26 PM</td><td>Microsoft</td></tr>
            <tr><td><svg class="i16"><use href="#xls"/></svg>Facture simple EN.xls</td><td>2020-08-25 11:52 AM</td><td>Microsoft</td></tr>
            <tr><td><svg class="i16"><use href="#xlsx"/></svg>Facture simple EN.xlsx</td><td>2020-08-25 1:30 PM</td><td>Microsoft</td></tr>
            <tr><td><svg class="i16"><use href="#xlsx"/></svg>Facture simple.xlsx</td><td>2020-08-04 10:33 AM</td><td>Microsoft</td></tr>
            <tr><td><svg class="i16"><use href="#xlsx"/></svg>Gabarit Facture simple.xlsx</td><td>2020-07-15 11:53 AM</td><td>Microsoft</td></tr>
            <tr><td><svg class="i16"><use href="#xlsx"/></svg>Gabarit Facture simple-test.xlsx</td><td>2020-07-24 11:22 AM</td><td>Microsoft</td></tr>
            <tr><td><svg class="i16"><use href="#xlsx"/></svg>Gabarit factures en lot.xlsx</td><td>2020-07-24 11:49 AM</td><td>Microsoft</td></tr>
            <tr><td><svg class="i16"><use href="#xlsx"/></svg>Gabarit Heures.xlsx</td><td>2020-07-31 11:53 AM</td><td>Microsoft</td></tr>
            <tr><td><svg class="i16"><use href="#xlsx"/></svg>Gabarit Projet.xlsx</td><td>2020-07-21 2:48 PM</td><td>Microsoft</td></tr>
            <tr><td><svg class="i16"><use href="#xlsx"/></svg>Heures EN.xlsx</td><td>2020-08-25 10:43 AM</td><td>Microsoft</td></tr>
            <tr><td><svg class="i16"><use href="#xlsx"/></svg>projet.xlsx</td><td>2020-08-04 1:41 PM</td><td>Microsoft</td></tr>
            <tr><td><svg class="i16"><use href="#xlsx"/></svg></td><td></td><td></td></tr>
          </tbody>
        </table>
      </div>
      <div class="vscroll dark"><svg><use href="#chev-u"/></svg><i class="th261"></i><svg><use href="#chev-d"/></svg></div>
      <div class="hscroll dark"><svg><use href="#chev-l"/></svg><i class="tw335"></i><svg><use href="#chev-r"/></svg></div>
    </div>
  </div>
  <form class="pk-foot">
    <label for="fn">File name:</label>
    <span class="combo"><input id="fn"><i class="text-caret"></i><svg><use href="#thin-d"/></svg></span>
    <span class="ftype"><select aria-label="File type"><option>Fichiers Excel</option></select><svg><use href="#thin-d"/></svg></span>
    <div class="acts"><span class="open"><button type="button">Open</button><button type="button" class="split" aria-label="Open options"><svg class="car"><use href="#caret"/></svg></button></span><button type="button" class="cancel">Cancel</button></div>
    <svg class="dots"><use href="#dots"/></svg>
  </form>
</section>

<svg class="cursor" viewBox="0 0 16 24" aria-hidden="true"><path d="M1 1v18l4-4 3.500 7.500 3-1.300L8 14h6z" fill="#fff" stroke="#223"/></svg>
</body>
</html>
```
FILE: styles.css
```css
* { box-sizing: border-box; }
html, body { height: 100%; }
body {
  margin: 0;
  overflow: hidden;
  position: relative;
  background: #fff;
  color: #000;
  font: 11px/16px "Noto Sans", "Open Sans", sans-serif;
}
p, h2, h3, ul, dl, dd { margin: 0; padding: 0; }
button, input, select { font: inherit; color: inherit; margin: 0; padding: 0; border: 0; background: none; border-radius: 0; outline: 0; }
input { min-width: 0; }
svg { display: block; flex: none; }
a { color: inherit; text-decoration: none; }
h2, h3 { font-size: 14px; line-height: 20px; font-weight: 700; }
.sprite { position: absolute; width: 0; height: 0; }
.i16 { width: 16px; height: 16px; }
.i12 { width: 12px; height: 12px; }
.i8 { width: 8px; height: 8px; }
.grow { flex: 1; }

/* window chrome */
.app { height: 100%; display: flex; flex-direction: column; }
.titlebar { display: flex; align-items: center; height: 23px; flex: none; padding-left: 2px; gap: 5px; color: #999; }
.winbtns { margin-left: auto; display: flex; }
.winbtns button { width: 46px; height: 22px; display: grid; place-items: center; }
.menubar { display: flex; align-items: center; gap: 11px; height: 27px; flex: none; padding-left: 4px; }
.menubar::before, .toolbar::before { content: ""; width: 3px; height: 16px; margin-right: -5px; background: repeating-linear-gradient(#bbb 0 1px, #fff 1px 2px); }
.toolbar { display: flex; align-items: center; height: 40px; flex: none; padding-left: 3px; }
.toolbar::before { height: 32px; margin-right: 2px; }
.toolbar button { width: 38px; height: 38px; display: grid; place-items: center; border: 1px solid transparent; }
.toolbar button svg { width: 32px; height: 32px; }
.toolbar .drop { width: 9px; border: 0; }
.toolbar .drop svg { width: 5px; height: 3px; }
.toolbar .on { background: #dfebf6; border-color: #0f7bd4; }
.toolbar .press { background: #8dbdea; border-color: #0f7bd4; }
.toolbar .hot { background: #b0d3f0; border: 1px solid #0f7bd4; }
.toolbar .hot.drop { width: 10px; border-left: 0; }
.toolbar .sep { width: 6px; height: 38px; border-left: 2px solid transparent; background: linear-gradient(90deg, #ccc 1px, transparent 1px) content-box; }
.toolbar .tight { width: 5px; }

/* shared grids and scrollbars */
.gridbox { display: grid; grid-template-columns: minmax(0, 1fr) 17px; grid-template-rows: minmax(0, 1fr) 16px; }
.gridbox.grow { min-height: 0; }
.clip { overflow: hidden; min-width: 0; min-height: 0; }
table { border-collapse: separate; border-spacing: 0; table-layout: fixed; width: 100%; }
th, td { padding: 0; font-weight: 400; overflow: hidden; white-space: nowrap; }
.vscroll, .hscroll { display: flex; align-items: center; background: #f0f0f0; color: #505050; }
.vscroll { flex-direction: column; border-left: 1px solid #fff; padding: 2px 0; }
.hscroll { border-top: 1px solid #fff; padding: 0 4px 0 3px; }
.vscroll svg, .hscroll svg { width: 8px; height: 8px; margin: 1px; }
.vscroll svg:last-child { margin-top: auto; }
.hscroll svg:last-child { margin-left: auto; }
.vscroll i { width: 100%; margin-top: 4px; background: #cdcdcd; flex: none; }
.hscroll i { height: 15px; margin-left: 3px; background: #cdcdcd; }
.corner { background: #c8c8c8; }
.th17 { height: 17px; } .th37 { height: 37px; } .th92 { height: 92px; } .th94 { height: 94px; } .th261 { height: 261px; }
.tw98 { width: 98px; } .tw335 { width: 335px; } .tw416 { width: 416px; } .tgrow { flex: 1; margin-right: 185px; }
.c16 { width: 16px; } .c18 { width: 18px; } .c19 { width: 19px; } .c33 { width: 33px; } .c40 { width: 40px; } .c43 { width: 43px; } .c45 { width: 45px; } .c46 { width: 46px; } .c47 { width: 47px; }
.c60 { width: 60px; } .c69 { width: 69px; } .c72 { width: 72px; } .c73 { width: 73px; } .c77 { width: 77px; } .c89 { width: 89px; } .c93 { width: 93px; }
.c94 { width: 94px; } .c100 { width: 100px; } .c104 { width: 104px; } .c108 { width: 108px; } .c118 { width: 118px; } .c120 { width: 120px; }
.c130 { width: 130px; } .c131 { width: 131px; } .c136 { width: 136px; } .c144 { width: 144px; } .c161 { width: 161px; } .c181 { width: 181px; }

.datagrid thead th { height: 20px; padding-bottom: 2px; background: #f0f0f0; border-right: 1px solid #999; border-bottom: 1px solid #999; border-top: 1px solid #fff; }
.datagrid tbody th { height: 16px; line-height: 15px; background: #f0f0f0; border-right: 1px solid #999; border-bottom: 1px solid #999; }
.datagrid tbody td { background: #fff; border-right: 1px solid #e3e3e3; }
.datagrid tbody tr:nth-child(even) td, .sumgrid tbody tr:nth-child(even) td { background: #f3f3f3; }
.datagrid thead .cutcell { text-align: left; padding-left: 3px; border-right: 0; }
.datagrid thead .acct { padding-left: 13px; }

/* summary */
.summary { flex: none; margin: 1px 3px 0 2px; border: 2px solid #888; border-top-color: #777; border-right: 1px solid #999; border-bottom: 1px solid #ddd; }
.summary-head { display: flex; justify-content: space-between; background: #e5e5e5; height: 66px; padding: 5px 0 0 7px; }
.summary-head h2 { height: 19px; }
.filters { display: grid; grid-template-columns: 81px 92px 38px 98px 93px 206px auto; }
.filters label { line-height: 13px; white-space: nowrap; display: flex; flex-direction: column; }
.filters input { height: 21px; background: #fff; border: 1px solid #7a7a7a; padding: 0 4px; }
.w17 { width: 17px; } .w75 { width: 75px; } .w83 { width: 83px; } .w200 { width: 200px; }
.any { display: flex; align-items: flex-end; gap: 6px; border-left: 1px solid #000; padding-left: 7px; margin-left: 1px; }
.any input { width: 114px; }
.any button { width: 48px; height: 20px; line-height: 16px; background: #e1e1e1; border: 1px solid #adadad; }
.summary-btns { display: flex; flex-direction: column; align-items: flex-end; gap: 18px; margin-top: -3px; }
.summary-btns button { width: 18px; height: 17px; display: grid; place-items: center; background: #f0f0f0; border: 1px solid #fff; border-right-color: #777; border-bottom-color: #777; }
.summary-btns .clear { margin-right: 5px; }
.sumclip { height: 122px; padding-left: 2px; }
.sumgrid thead th { height: 20px; background: #475059; color: #fff; border-right: 1px solid #aaa; border-bottom: 1px solid #999; }
.sumgrid thead span { display: flex; align-items: center; padding: 0 1px 0 5px; }
.sumgrid thead svg { width: 10px; height: 12px; }
.sumgrid thead b { flex: 1; font-weight: 400; text-align: center; }
.sumgrid thead th:nth-child(-n+8) b { padding-left: 2px; }
.sumgrid thead .right { text-align: right; }
.sumgrid thead .cut { text-align: right; margin-right: -33px; }
.sumgrid tbody th { background: #475059; color: #fff; border-bottom: 1px solid #aaa; text-align: left; padding-left: 2px; height: 18px; line-height: 17px; }
.sumgrid td { height: 18px; padding: 0 2px 2px; border-right: 1px solid #e3e3e3; }
.sumgrid td:nth-child(2), .sumgrid td:nth-child(3), .sumgrid td:nth-child(8) { text-align: right; }
.plain { background: #fff; }

/* sale */
.sale { flex: 1; min-height: 0; margin: 5px 3px 2px 2px; border: 2px solid #888; border-right: 1px solid #ddd; border-top-color: #777; padding: 5px 2px 0 4px; display: flex; flex-direction: column; }
.customer { display: flex; height: 70px; flex: none; border: 1px solid #e5e5e5; margin-left: 1px; text-align: right; }
.cust-a { width: 60px; padding-top: 2px; }
.cust-a p + p { margin-top: 7px; }
.cust-b { width: 177px; padding-top: 1px; }
.cust-b p + p { margin-top: 1px; }
.tabs { display: flex; align-items: flex-end; gap: 2px; height: 24px; flex: none; }
.tabs button { height: 20px; background: #b3b3b3; border-right: 2px solid #777; white-space: nowrap; }
.tabs .tab-xs { width: 45px; } .tabs .tab-s { width: 56px; } .tabs .tab-m { width: 108px; } .tabs .tab-l { width: 142px; }
.tabs .active { height: 22px; background: #e5e5e5; font-size: 12px; font-weight: 700; margin-right: -2px; padding: 0 5px; }
.detail { flex: 1; min-height: 0; background: #e5e5e5; display: flex; flex-direction: column; padding: 5px 0 0 2px; }
.form { display: flex; height: 149px; flex: none; overflow: hidden; }
.col-a { display: grid; grid-template-columns: 73px 88px; column-gap: 6px; align-content: start; row-gap: 3px; }
.col-a label { text-align: right; line-height: 14px; }
.field { display: flex; height: 19px; background: #fff; padding: 2px; }
.field.gap { margin-top: 5px; }
.field.last { margin-top: -1px; }
.col-a .period { padding: 5px 3px 0 0; position: relative; }
.period::after { content: ""; position: absolute; right: 22px; bottom: 0; width: 5px; height: 1px; background: #000; }
.col-a .to { margin-top: -1px; }
.field input { flex: 1; white-space: pre; padding-bottom: 1px; }
.field button { width: 15px; display: grid; place-items: center; background: #c5d8fb; color: #3c5a94; }
.field svg { width: 9px; height: 9px; }
.col-b { display: grid; grid-template-columns: 90px 92px; column-gap: 7px; align-content: start; padding-left: 1px; }
.col-b label { text-align: right; line-height: 18px; }
.sel { position: relative; height: 22px; display: flex; }
.sel.short { width: 56px; }
.sel select { appearance: none; width: 100%; height: 21px; border: 1px solid #adadad; background: #e3e3e3; padding: 0 0 1px 3px; }
.sel svg { position: absolute; right: 4px; top: 5px; width: 10px; height: 10px; color: #444; }
.col-b h3 { grid-column: 1 / 3; height: 14px; padding-left: 30px; }
.num { height: 20px; padding-bottom: 1px; display: flex; }
.num input { width: 100%; background: #fff; text-align: right; padding: 0 3px 2px 0; }
.col-c { padding: 2px 0 0 27px; line-height: 22px; }
.col-c p:first-child { padding-left: 27px; line-height: 20px; }
.col-c h3 { line-height: 24px; padding-left: 4px; }
.col-c h3 + p { padding-left: 31px; line-height: 14px; }
.lines { flex: 1; min-height: 0; display: flex; flex-direction: column; border: 2px solid #999; border-bottom-color: #888; }
.totals { display: flex; justify-content: flex-end; height: 20px; flex: none; }
.totals div { display: flex; justify-content: space-between; }
.totals dd { font-weight: 700; }
.t158 { width: 158px; margin-right: 34px; } .t163 { width: 163px; margin-right: 16px; } .t194 { width: 194px; margin-right: 18px; }

/* status bars */
.status { display: flex; height: 23px; flex: none; background: #475059; color: #fff; padding: 1px 0; line-height: 20px; }
.status span { border-left: 2px solid #e8e8e8; padding-left: 4px; }
.main-status input { width: 197px; margin: 1px 2px 1px 3px; background: #fff; color: #000; padding: 0 0 1px 2px; }
.status .st-grow { flex: 1; }
.status .st82 { width: 83px; } .status .st160 { width: 161px; } .status .st202 { width: 202px; border: 0; padding-left: 6px; }
.status .st18 { width: 18px; display: flex; align-items: flex-end; }

/* import window */
.window { position: absolute; left: 430px; top: 141px; width: 986px; height: 713px; background: #fff; border: 1px solid #999; box-shadow: 0 3px 12px rgba(0,0,0,.35); display: flex; flex-direction: column; }
.window .titlebar { height: 29px; padding-left: 8px; }
.window .menubar { height: 28px; padding-left: 4px; }
.window .toolbar { height: 42px; padding-bottom: 2px; }
.import { flex: 1; min-height: 0; background: #e5e5e5; border: 1px solid #999; display: flex; flex-direction: column; padding: 6px 3px 4px 2px; margin-right: 1px; }
.path { display: flex; background: #fff; height: 19px; margin: 0 7px 9px 40px; padding: 2px 1px; }
.path input { flex: 1; }
.path button { width: 16px; background: #c9dcfb; line-height: 12px; font-weight: 700; }
.panels { flex: 1; min-height: 0; display: flex; flex-direction: column; border: 1px solid #999; border-bottom: 2px solid #999; padding-right: 2px; }
.panel h3 { padding-left: 7px; height: 20px; line-height: 30px; }
.panel .gridbox { border: 1px solid #999; border-left: 0; }
.p1 .gridbox { height: 188px; margin-bottom: 4px; }
.p1 { border-bottom: 2px solid #888; }
.p2 { flex: 1; min-height: 0; display: flex; flex-direction: column; }
.p2 h3 { line-height: 32px; height: 22px; }
.window .status { height: 22px; padding: 0; }
.window .st18 { width: 20px; }

/* file picker */
.picker { position: absolute; left: 472px; top: 248px; width: 754px; height: 499px; border: 1px solid #555; background: #191919; color: #fff; box-shadow: 0 4px 16px rgba(0,0,0,.55); display: flex; flex-direction: column; }
.dim { color: #8a8a8a; }
.pk-title { display: flex; align-items: center; height: 29px; flex: none; background: #000; padding: 0 9px 1px 10px; gap: 4px; }
.pk-title button { margin-left: auto; }
.pk-nav { display: flex; align-items: center; height: 35px; flex: none; padding: 0 12px; }
.nav { width: 30px; }
.nav svg { width: 14px; height: 12px; }
.recent { width: 8px; margin-left: -4px; }
.up { width: 14px; margin: 0 6px 0 10px; }
.up svg { width: 14px; height: 14px; }
.crumbs { flex: 1; height: 22px; border: 1px solid #555; display: flex; align-items: center; padding: 0 3px; margin-right: 10px; }
.crumbs i { font-style: normal; font-size: 14px; color: #999; width: 20px; text-align: center; }
.crumbs svg.dim { margin: 0 8px; }
.crumbs button { width: 18px; display: grid; place-items: center; }
.search { width: 203px; height: 22px; border: 1px solid #555; display: flex; align-items: center; padding: 0 9px; }
.search input { flex: 1; }
.search input::placeholder { color: #8f8f8f; opacity: 1; }
.search svg { color: #aaa; }
.pk-tools { display: flex; align-items: center; height: 30px; flex: none; background: #202020; padding: 0 15px 0 18px; border-bottom: 1px solid #111; }
.pk-tools button { display: flex; align-items: center; gap: 5px; }
.pk-tools button + button { margin-left: 31px; }
.pk-tools .grow ~ button { margin-left: 9px; }
.pk-tools .grow ~ .pane { margin-left: 22px; }
.pk-tools .pane + button { margin-left: 20px; }
.car { width: 8px; height: 4px; color: #ccc; }
.vw { width: 16px; height: 13px; }
.pk-body { display: flex; height: 327px; flex: none; overflow: hidden; }
.tree { list-style: none; width: 239px; padding-top: 1px; overflow: hidden; }
.tree li { display: flex; align-items: center; gap: 5px; height: 24px; white-space: nowrap; }
.tree .sub { padding-left: 32px; }
.tree .root { padding-left: 24px; margin-top: 8px; }
.tree .here { background: #333; }
.vscroll.dark, .hscroll.dark { background: #171717; color: #6a6a6a; border-color: #171717; }
.dark i { background: #4d4d4d; }
.pk-body > .dark b { height: 124px; }
.pk-body > .dark { width: 17px; }
.pk-body > .dark i { margin-top: 0; }
.pk-body .vscroll { padding-top: 4px; }
.files { flex: 1; min-width: 0; border-left: 2px solid #2b2b2b; margin-left: 1px; background: #202020; grid-template-rows: minmax(0, 1fr) 18px; }
.files .clip { padding-left: 15px; }
.files .hscroll { padding: 0 4px 1px 4px; }
.files .hscroll i { margin-left: 4px; }
.filelist th { height: 26px; text-align: left; color: #ddd; padding: 1px 0 0 6px; border-left: 1px solid #555; position: relative; }
.filelist th:first-child { border: 0; padding-left: 3px; }
.sortmark { position: absolute; top: 0; left: 123px; color: #aaa; }
.filelist td { height: 21px; padding-left: 7px; color: #ddd; }
.filelist td:first-child { display: flex; align-items: center; gap: 4px; padding-left: 4px; color: #fff; }
.filelist thead::after { content: ""; display: block; height: 6px; }
.hover { background: #4d4d4d; }
.pk-foot { flex: 1; background: #383838; display: grid; grid-template-columns: 189px 346px 188px; grid-template-rows: 24px 26px; align-content: start; row-gap: 5px; padding-top: 9px; position: relative; }
.pk-foot label { text-align: right; padding-right: 6px; line-height: 22px; }
.combo { display: flex; align-items: center; border: 1px solid #fff; padding: 0 3px; color: #bbb; }
.combo input { flex: 1; order: 1; color: #fff; }
.combo svg, .ftype svg { width: 10px; height: 10px; order: 2; }
.text-caret { width: 1px; height: 15px; background: #ddd; }
.ftype { margin-left: 12px; width: 188px; position: relative; }
.ftype select { appearance: none; width: 100%; height: 23px; border: 1px solid #999; background: #333; padding: 0 0 1px 3px; }
.ftype svg { position: absolute; right: 4px; top: 7px; color: #bbb; }
.acts { grid-column: 3; margin-left: 12px; width: 188px; display: flex; justify-content: space-between; }
.open, .cancel { width: 88px; height: 26px; border: 2px solid #fff; background: #333; display: flex; }
.cancel { border-color: #ccc; display: block; padding-bottom: 2px; }
.open button:first-child { flex: 1; padding-bottom: 2px; }
.split { width: 14px; margin: 2px 0; border-left: 1px solid #ccc; display: grid; place-items: center; }
.dots { position: absolute; right: 3px; bottom: 3px; width: 9px; height: 9px; }
.cursor { position: absolute; left: 1526px; top: 519px; width: 16px; height: 24px; }
```
FILE: grid.js
```js
// Fills each data grid with its blank entry rows, one cell per header column.
document.querySelectorAll("table[data-rows]").forEach(function (table) {
  var columns = table.tHead.rows[0].cells.length;
  var numbered = table.hasAttribute("data-numbered");
  for (var r = 1; r <= Number(table.dataset.rows); r++) {
    var row = table.tBodies[0].insertRow();
    var head = document.createElement("th");
    head.textContent = numbered ? r : "";
    row.appendChild(head);
    for (var c = 1; c < columns; c++) row.insertCell();
  }
});
```
